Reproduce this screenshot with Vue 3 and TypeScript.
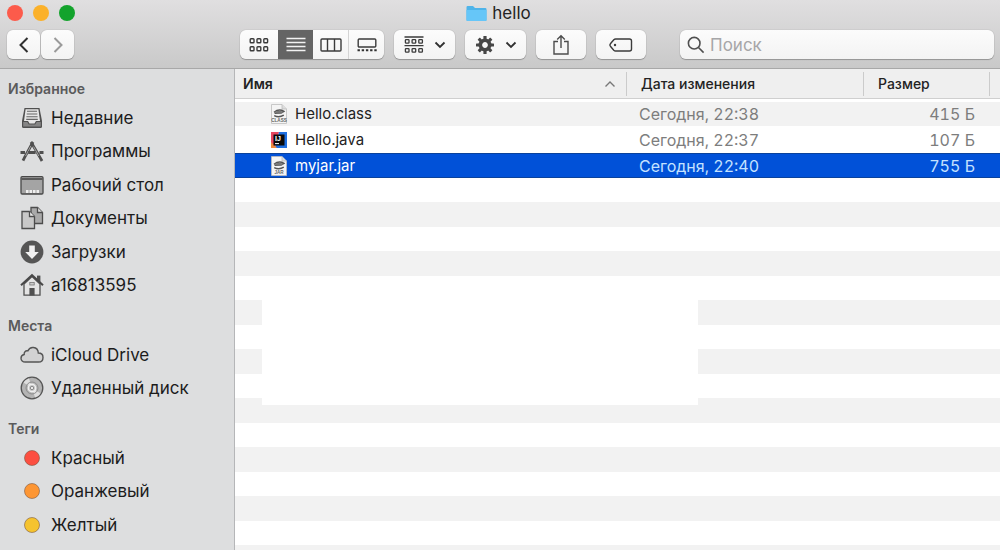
<script setup lang="ts">
import { ref } from 'vue'

interface PlaceItem {
  label: string
  icon: string
  color?: string
}

interface Section {
  title: string
  items: PlaceItem[]
}

interface FileRow {
  name: string
  kind: 'class' | 'java' | 'jar'
  date: string
  size: string
}

const sections: Section[] = [
  {
    title: 'Избранное',
    items: [
      { label: 'Недавние', icon: 'recent' },
      { label: 'Программы', icon: 'apps' },
      { label: 'Рабочий стол', icon: 'desktop' },
      { label: 'Документы', icon: 'docs' },
      { label: 'Загрузки', icon: 'downloads' },
      { label: 'a16813595', icon: 'home' },
    ],
  },
  {
    title: 'Места',
    items: [
      { label: 'iCloud Drive', icon: 'cloud' },
      { label: 'Удаленный диск', icon: 'disc' },
    ],
  },
  {
    title: 'Теги',
    items: [
      { label: 'Красный', icon: 'tag', color: '#fc4f41' },
      { label: 'Оранжевый', icon: 'tag', color: '#fd9634' },
      { label: 'Желтый', icon: 'tag', color: '#f5c32f' },
    ],
  },
]

const files: FileRow[] = [
  { name: 'Hello.class', kind: 'class', date: 'Сегодня, 22:38', size: '415 Б' },
  { name: 'Hello.java', kind: 'java', date: 'Сегодня, 22:37', size: '107 Б' },
  { name: 'myjar.jar', kind: 'jar', date: 'Сегодня, 22:40', size: '755 Б' },
]

const selected = ref('myjar.jar')
const query = ref('')
const gearTeeth = [0, 45, 90, 135, 180, 225, 270, 315]
</script>

<template>
  <div class="window">
    <header class="chrome">
      <div class="titlebar">
        <div class="lights">
          <button class="light red" aria-label="Закрыть"></button>
          <button class="light amber" aria-label="Свернуть"></button>
          <button class="light green" aria-label="Развернуть"></button>
        </div>
        <h1 class="title">
          <svg width="21" height="17" viewBox="0 0 21 17" aria-hidden="true">
            <path d="M0.5 2.2Q0.5 1 1.7 1H7L9 3H19.3Q20.5 3 20.5 4.2V15Q20.5 16 19.5 16H1.5Q0.5 16 0.5 15Z" fill="#4fb4e9" />
            <path d="M0.5 5H20.5V15Q20.5 16 19.5 16H1.5Q0.5 16 0.5 15Z" fill="#66c6f8" />
          </svg>
          hello
        </h1>
        <div class="lights-balance"></div>
      </div>

      <div class="toolbar">
        <div class="nav">
          <button class="btn nav-btn" aria-label="Назад">
            <svg width="12" height="18" viewBox="0 0 12 18"><path d="M9.5 2L2.5 9L9.5 16" fill="none" stroke="#303030" stroke-width="2" /></svg>
          </button>
          <button class="btn nav-btn" aria-label="Вперед">
            <svg width="12" height="18" viewBox="0 0 12 18"><path d="M2.5 2L9.5 9L2.5 16" fill="none" stroke="#9a9a9a" stroke-width="2" /></svg>
          </button>
        </div>

        <div class="tools">
          <div class="btn segments">
            <button class="segment" aria-label="Значки">
              <svg width="20" height="16" viewBox="0 0 20 16" fill="none" stroke="#3b3b3b" stroke-width="1.4">
                <rect x="1.2" y="1.7" width="3.8" height="4" rx="0.8" /><rect x="8" y="1.7" width="3.8" height="4" rx="0.8" /><rect x="14.8" y="1.7" width="3.8" height="4" rx="0.8" />
                <rect x="1.2" y="9.7" width="3.8" height="4" rx="0.8" /><rect x="8" y="9.7" width="3.8" height="4" rx="0.8" /><rect x="14.8" y="9.7" width="3.8" height="4" rx="0.8" />
              </svg>
            </button>
            <button class="segment active" aria-label="Список">
              <svg width="20" height="16" viewBox="0 0 20 16"><path d="M0.5 1.5H19.5M0.5 5.5H19.5M0.5 9.5H19.5M0.5 13.5H19.5" stroke="#f2f2f2" stroke-width="1.3" /></svg>
            </button>
            <button class="segment" aria-label="Колонки">
              <svg width="22" height="14" viewBox="0 0 22 14" fill="none" stroke="#3b3b3b" stroke-width="1.4"><rect x="1" y="1" width="20" height="12" rx="1" /><path d="M7.5 1V13M14.5 1V13" /></svg>
            </button>
            <button class="segment" aria-label="Галерея">
              <svg width="20" height="14" viewBox="0 0 20 14"><rect x="1.2" y="1" width="17.6" height="8" rx="1" fill="none" stroke="#3b3b3b" stroke-width="1.4" /><path d="M0.5 12.2H20" stroke="#303030" stroke-width="2" stroke-dasharray="2.4 1.8" /></svg>
            </button>
          </div>

          <button class="btn menu-btn" aria-label="Группировка">
            <svg width="20" height="18" viewBox="0 0 20 18" fill="none" stroke="#3b3b3b" stroke-width="1.3">
              <path d="M0.5 1H19.5M0.5 9.6H19.5" />
              <rect x="1.4" y="3.6" width="3.6" height="3.6" rx="0.7" /><rect x="8.1" y="3.6" width="3.6" height="3.6" rx="0.7" /><rect x="14.8" y="3.6" width="3.6" height="3.6" rx="0.7" />
              <rect x="1.4" y="12.6" width="3.6" height="3.6" rx="0.7" /><rect x="8.1" y="12.6" width="3.6" height="3.6" rx="0.7" /><rect x="14.8" y="12.6" width="3.6" height="3.6" rx="0.7" />
            </svg>
            <svg width="12" height="8" viewBox="0 0 12 8"><path d="M1.5 1.5L6 6L10.5 1.5" fill="none" stroke="#303030" stroke-width="1.8" /></svg>
          </button>

          <button class="btn menu-btn" aria-label="Действия">
            <svg width="20" height="20" viewBox="-10 -10 20 20">
              <rect v-for="angle in gearTeeth" :key="angle" x="-1.6" y="-9" width="3.2" height="5" rx="0.5" fill="#474747" :transform="`rotate(${angle})`" />
              <circle r="4.7" fill="none" stroke="#474747" stroke-width="3.6" />
            </svg>
            <svg width="12" height="8" viewBox="0 0 12 8"><path d="M1.5 1.5L6 6L10.5 1.5" fill="none" stroke="#303030" stroke-width="1.8" /></svg>
          </button>

          <button class="btn wide-btn" aria-label="Поделиться">
            <svg width="18" height="22" viewBox="0 0 18 22" fill="none" stroke="#4c4c4c" stroke-width="1.4"><path d="M6 7.5H2V20H16V7.5H12" /><path d="M9 14V2M5.2 5.6L9 1.8L12.8 5.6" /></svg>
          </button>

          <button class="btn wide-btn" aria-label="Теги">
            <svg width="24" height="14" viewBox="0 0 24 14"><path d="M6.6 1H20.5Q22.5 1 22.5 3V11Q22.5 13 20.5 13H6.6Q5.6 13 4.8 12.2L1.4 8.2Q0.5 7 1.4 5.8L4.8 1.8Q5.6 1 6.6 1Z" fill="none" stroke="#3b3b3b" stroke-width="1.4" /><circle cx="6" cy="7" r="1.2" fill="#3b3b3b" /></svg>
          </button>

          <label class="btn search">
            <svg width="18" height="18" viewBox="0 0 18 18" fill="none" stroke="#4f4f4f" stroke-width="1.6"><circle cx="7.2" cy="7.2" r="5.8" /><path d="M11.5 11.5L16.6 16.6" /></svg>
            <input v-model="query" type="text" placeholder="Поиск" aria-label="Поиск" />
          </label>
        </div>
      </div>
    </header>

    <div class="body">
      <nav class="sidebar" aria-label="Боковое меню">
        <section v-for="section in sections" :key="section.title" class="section">
          <h2>{{ section.title }}</h2>
          <ul>
            <li v-for="item in section.items" :key="item.label">
              <a href="#" @click.prevent>
                <svg width="24" height="24" viewBox="0 0 24 24" aria-hidden="true">
                  <g v-if="item.icon === 'recent'">
                    <path d="M4.5 2H19.5L22 15V20.5Q22 22 20.5 22H3.5Q2 22 2 20.5V15Z" fill="#505050" />
                    <path d="M5.6 3.3H18.4L20 15H16L14.5 17.6H9.5L8 15H4Z" fill="#e6e6e6" />
                    <path d="M7 5.2H17M6.7 8H17.3M6.4 10.8H17.6M6.2 13.4H17.8" stroke="#666" stroke-width="1.1" />
                    <path d="M3.2 16H7.3L8.8 18.6H15.2L16.7 16H20.8V20.6H3.2Z" fill="#858585" />
                  </g>
                  <g v-else-if="item.icon === 'apps'" fill="none" stroke="#505050">
                    <path d="M13 3L4.6 18.4L3 21.6" stroke-width="2.8" />
                    <path d="M11 3L20 18.4L22 22" stroke-width="2.8" />
                    <path d="M10.8 7L5.6 17M13.6 7.6L18.8 17" stroke="#c5c5c5" stroke-width="0.7" />
                    <path d="M0.5 13.5H5M8.2 13.5H15.6M19.4 13.5H23.5" stroke-width="3" />
                  </g>
                  <g v-else-if="item.icon === 'desktop'">
                    <rect x="1" y="3.6" width="22" height="17.4" rx="1.2" fill="#a4a4a4" stroke="#484848" stroke-width="1.3" />
                    <path d="M1.6 6H22.4" stroke="#484848" stroke-width="1.6" />
                    <path d="M6 18.6H19" stroke="#efefef" stroke-width="3" stroke-dasharray="2.5 1" />
                  </g>
                  <g v-else-if="item.icon === 'docs'" stroke="#4c4c4c" stroke-width="1.3">
                    <path d="M11 1.5H17.5L22.5 6.5V17.5H11Z" fill="#aaa" /><path d="M17.5 1.5V6.5H22.5" fill="#ddd" />
                    <path d="M2 5.5H9.5L14.5 10.5V22.5H2Z" fill="#c8c8c8" /><path d="M9.5 5.5V10.5H14.5" fill="#eee" />
                  </g>
                  <g v-else-if="item.icon === 'downloads'">
                    <circle cx="12" cy="12" r="11.4" fill="#555" />
                    <path d="M9.2 5.5H14.8V12H18.8L12 19L5.2 12H9.2Z" fill="#f0f0f0" />
                  </g>
                  <g v-else-if="item.icon === 'home'">
                    <path d="M17 2.6H20.4V9H17Z" fill="#505050" />
                    <path d="M4 11L12 3.5L20 11V22.2H4Z" fill="#e4e4e4" stroke="#505050" stroke-width="1.3" />
                    <path d="M1 12.3L12 2.2L23 12.3" fill="none" stroke="#484848" stroke-width="2" />
                    <path d="M9.4 15H14.6V22.5H9.4Z" fill="#505050" />
                    <rect x="9.8" y="9.4" width="4.4" height="2.6" fill="#ccc" stroke="#777" stroke-width="0.8" />
                  </g>
                  <path v-else-if="item.icon === 'cloud'" d="M5.2 19C2.7 19 1 17.4 1 15.2C1 13.2 2.3 11.8 4.2 11.5C3.8 9.2 5.4 7.4 7.8 7.9C9 5.4 11 4.2 13.4 4.5C16.2 4.8 18.2 7 18.3 10C21.2 10 23 11.8 23 14.4C23 17.2 21.2 19 18.5 19Z" fill="#d2d2d3" stroke="#555" stroke-width="1.4" />
                  <g v-else-if="item.icon === 'disc'" fill="none">
                    <circle cx="12" cy="12" r="10.8" fill="#b4b4b4" stroke="#555" stroke-width="1.3" />
                    <path d="M12 12L3.5 6.5A10 10 0 0 1 9 2.4ZM12 12L20.5 17.5A10 10 0 0 1 15 21.6Z" fill="#dedede" />
                    <circle cx="12" cy="12" r="6" stroke="#8d8d8d" />
                    <circle cx="12" cy="12" r="3.7" fill="#c8c8c8" stroke="#f0f0f0" stroke-width="1.4" />
                    <circle cx="12" cy="12" r="1.7" fill="#e8e8e8" stroke="#777" stroke-width="0.8" />
                  </g>
                  <circle v-else cx="12" cy="12" r="7.5" :fill="item.color" stroke="#73503c" stroke-opacity="0.55" />
                </svg>
                <span>{{ item.label }}</span>
              </a>
            </li>
          </ul>
        </section>
      </nav>

      <main class="content">
        <table>
          <colgroup>
            <col />
            <col class="col-date" />
            <col class="col-size" />
            <col class="col-rest" />
          </colgroup>
          <thead>
            <tr>
              <th class="sorted" aria-sort="ascending">
                <div class="head">
                  Имя
                  <svg width="12" height="8" viewBox="0 0 12 8"><path d="M1.5 6.5L6 2L10.5 6.5" fill="none" stroke="#777" stroke-width="1.4" /></svg>
                </div>
              </th>
              <th><div class="head ruled">Дата изменения</div></th>
              <th><div class="head ruled">Размер</div></th>
              <th><div class="head ruled"></div></th>
            </tr>
          </thead>
          <tbody>
            <tr v-for="file in files" :key="file.name" :class="{ selected: file.name === selected }" @click="selected = file.name">
              <td>
                <div class="file">
                  <svg width="18" height="20" viewBox="0 0 18 20" aria-hidden="true">
                    <g v-if="file.kind === 'java'">
                      <path d="M1 2H9L5 18H1Z" fill="#e8475f" />
                      <path d="M9 2H17V18H5Z" fill="#1f6fe0" />
                      <path d="M1 12L7 18H1Z" fill="#f08a3c" />
                      <rect x="3.5" y="4.5" width="11" height="11" fill="#0b0b0b" />
                      <text x="5" y="10.6" class="glyph" font-size="7" fill="#fff">IJ</text>
                      <path d="M5 13.6H9" stroke="#fff" />
                    </g>
                    <g v-else>
                      <path d="M1.5 0.5H12L16.5 5V19.5H1.5Z" fill="#f4f4f4" stroke="#bdbdbd" stroke-width="0.8" />
                      <path d="M12 0.5V5H16.5" fill="#ddd" stroke="#bdbdbd" stroke-width="0.8" />
                      <path d="M4 8.2Q9 4.4 14 7.4Q11 9.8 4.6 9.2M4.2 11.6Q9 14 13.8 11.2" fill="none" stroke="#555" stroke-width="1.4" />
                      <ellipse cx="9" cy="8.3" rx="3.8" ry="1.5" fill="#777" />
                      <text x="9" y="18.4" class="glyph" text-anchor="middle" font-size="4.6" fill="#666">{{ file.kind === 'class' ? 'CLASS' : 'JAR' }}</text>
                    </g>
                  </svg>
                  <span>{{ file.name }}</span>
                </div>
              </td>
              <td class="date">{{ file.date }}</td>
              <td class="size">{{ file.size }}</td>
              <td></td>
            </tr>
          </tbody>
        </table>
        <div class="empty-rows">
          <div class="blank"></div>
        </div>
      </main>
    </div>
  </div>
</template>

<style>
body {
  margin: 0;
}
</style>

<style scoped>
* {
  box-sizing: border-box;
}

.window {
  display: flex;
  flex-direction: column;
  height: 100vh;
  overflow: hidden;
  color: #232323;
  background: #fff;
  font-family: Inter, "Liberation Sans", sans-serif;
}

button {
  margin: 0;
  padding: 0;
  border: 0;
  font: inherit;
}

svg {
  display: block;
  flex: none;
}

.chrome {
  flex: none;
  background: linear-gradient(#e0dfe0, #c9c9c9);
  border-bottom: 1px solid #a8a8a8;
  padding-bottom: 9px;
}

.titlebar {
  display: flex;
  align-items: center;
  height: 26px;
  margin-bottom: 4px;
}

.lights,
.lights-balance {
  display: flex;
  gap: 10px;
  flex: 1;
  padding-left: 7px;
}

.lights-balance {
  padding-right: 3px;
}

.light {
  width: 16px;
  height: 16px;
  border-radius: 50%;
}

.red { background: #fc5b4b; }
.amber { background: #fbb12a; }
.green { background: #13a32c; }

.title {
  display: flex;
  align-items: center;
  gap: 5px;
  margin: 0;
  font-size: 17px;
  font-weight: 400;
  line-height: 26px;
}

.toolbar {
  display: flex;
  height: 29px;
}

.nav {
  display: flex;
  gap: 1px;
  flex: none;
  width: 240px;
  padding-left: 7px;
}

.btn {
  display: flex;
  align-items: center;
  justify-content: center;
  height: 29px;
  border-radius: 6px;
  background: linear-gradient(#fcfcfc, #f3f3f3);
  box-shadow: 0 0 1px rgba(0, 0, 0, 0.35), 0 1px 1px rgba(0, 0, 0, 0.25);
}

.nav-btn {
  width: 33px;
}

.tools {
  display: flex;
  flex: 1;
  gap: 10px;
  padding-right: 6px;
}

.segments {
  flex: none;
  overflow: hidden;
}

.segment {
  display: flex;
  align-items: center;
  justify-content: center;
  width: 35px;
  height: 29px;
  background: transparent;
  border-left: 1px solid #d4d4d4;
}

.segment:first-child {
  width: 38px;
  border-left: 0;
}

.segment:last-child {
  width: 36px;
}

.segment.active {
  background: #646464;
  border-color: #646464;
}

.segment.active + .segment {
  border-color: transparent;
}

.menu-btn {
  flex: none;
  gap: 10px;
  width: 61px;
}

.wide-btn {
  flex: none;
  width: 50px;
}

.search {
  flex: 1;
  justify-content: flex-start;
  gap: 5px;
  margin-left: 24px;
  padding: 0 7px;
}

.search input {
  flex: 1;
  min-width: 0;
  padding: 0;
  border: 0;
  outline: 0;
  background: transparent;
  font: 400 17px/24px Inter, "Liberation Sans", sans-serif;
}

.search input::placeholder {
  color: #a6a6a8;
  opacity: 1;
}

.body {
  display: flex;
  flex: 1;
  min-height: 0;
}

.sidebar {
  flex: none;
  width: 235px;
  padding-top: 7px;
  overflow: hidden;
  background: #dddedf;
  border-right: 1px solid #b5b6b8;
}

.section {
  margin-bottom: 11px;
}

.section h2 {
  margin: 0;
  padding-left: 8px;
  color: #5a5a5b;
  font-size: 14px;
  font-weight: 600;
  line-height: 25px;
}

.section ul {
  margin: 0;
  padding: 0;
  list-style: none;
}

.section a {
  display: flex;
  align-items: center;
  gap: 7px;
  height: 33px;
  padding-left: 20px;
  color: #1c1c1c;
  font-size: 17px;
  font-weight: 400;
  text-decoration: none;
  white-space: nowrap;
}

.section li:nth-child(even) a {
  height: 34px;
}

.content {
  display: flex;
  flex: 1;
  flex-direction: column;
  min-width: 0;
}

table {
  width: 100%;
  table-layout: fixed;
  border-collapse: separate;
  border-spacing: 0;
}

.col-date { width: 237px; }
.col-size { width: 126px; }
.col-rest { width: 11px; }

th {
  padding: 0;
  height: 30px;
  background: #efefef;
  border-bottom: 1px solid #cfcfcf;
  font-size: 14px;
  font-weight: 500;
  text-align: left;
}

.sorted {
  font-weight: 600;
}

.head {
  display: flex;
  align-items: center;
  justify-content: space-between;
  height: 24px;
  padding: 0 10px 0 8px;
}

.ruled {
  padding-left: 14px;
  border-left: 1px solid #cbcbcb;
}

thead th:last-child .head {
  padding: 0;
}

tbody::before {
  content: "";
  display: table-row;
  height: 3px;
}

td {
  height: 24px;
  padding: 0;
  font-size: 15px;
  line-height: 20px;
  white-space: nowrap;
}

tbody tr:nth-child(odd) td {
  background: #f2f2f2;
}

tbody tr:nth-child(even) td {
  height: 27px;
}

tbody tr:last-child td {
  height: 25px;
}

.file {
  display: flex;
  align-items: center;
  gap: 7px;
  padding-left: 35px;
}

.glyph {
  font-family: "Liberation Sans", sans-serif;
  font-weight: 700;
}

.date {
  padding-left: 13px;
}

.size {
  padding-right: 14px;
  text-align: right;
}

.date,
.size {
  color: #7d7d7d;
  font-size: 16px;
  font-variant-numeric: tabular-nums;
}

tbody tr.selected td {
  background: #0151d8;
  border-top: 1px solid #0a429c;
  border-bottom: 1px solid #0a429c;
  color: #fff;
}

tbody tr.selected .date,
tbody tr.selected .size {
  color: #c4e2ff;
}

.empty-rows {
  position: relative;
  flex: 1;
  background: repeating-linear-gradient(#fff 0 24px, #f2f2f2 24px 49px);
}

/* Cleared region lying over the striped rows */
.blank {
  position: absolute;
  top: 121px;
  left: 27px;
  width: 57%;
  height: 106px;
  background: #fff;
}
</style>
